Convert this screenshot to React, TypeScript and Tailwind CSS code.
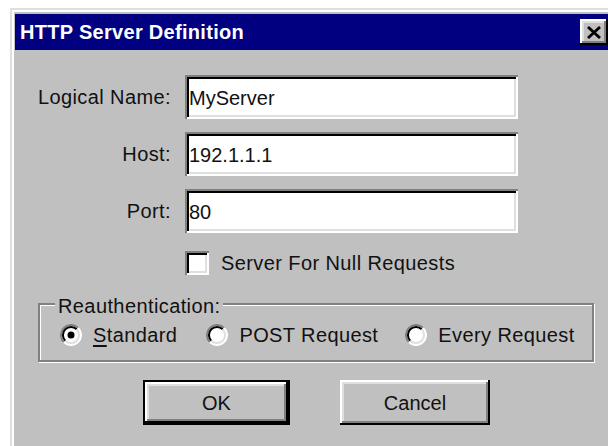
import React from 'react';

const font = { fontFamily: '"Liberation Sans", Arial, sans-serif' };

const raised =
  'bg-[#c0c0c0] shadow-[inset_-2px_-2px_0_#000,inset_2px_2px_0_#fff,inset_-4px_-4px_0_#808080,inset_4px_4px_0_#dfdfdf]';

const sunken =
  'bg-white shadow-[inset_2px_2px_0_#808080,inset_-2px_-2px_0_#fff,inset_4px_4px_0_#000,inset_-4px_-4px_0_#dfdfdf]';

function Field({ label, value }: { label: string; value: string }) {
  return (
    <div className="flex items-center">
      <span className="w-[157px] pr-[1px] text-right text-[20px] tracking-[0.4px] text-[#111]">{label}</span>
      <div className={`ml-[13px] flex h-[44px] w-[333px] items-center pl-[4px] pt-[2px] text-[20px] text-[#111] ${sunken}`}>
        {value}
      </div>
    </div>
  );
}

function Radio({ label, checked, underline }: { label: string; checked?: boolean; underline?: boolean }) {
  return (
    <div className="flex items-center gap-[11px]">
      <svg width="22" height="22" viewBox="0 0 22 22" className="shrink-0">
        <circle cx="11" cy="11" r="10" fill="#fff" />
        {/* top-left shadow arc */}
        <path d="M18.1 3.9 A10 10 0 0 0 3.9 18.1" fill="none" stroke="#808080" strokeWidth="2" />
        <path d="M16.7 5.3 A8 8 0 0 0 5.3 16.7" fill="none" stroke="#000" strokeWidth="2" />
        {/* bottom-right highlight arc */}
        <path d="M3.9 18.1 A10 10 0 0 0 18.1 3.9" fill="none" stroke="#fff" strokeWidth="2" />
        <path d="M5.3 16.7 A8 8 0 0 0 16.7 5.3" fill="none" stroke="#dfdfdf" strokeWidth="2" />
        {checked && <circle cx="11" cy="11" r="3.5" fill="#000" />}
      </svg>
      <span className="text-[20px] tracking-[0.4px] text-[#111]">
        {underline ? (
          <>
            <span className="underline underline-offset-[3px]">{label[0]}</span>
            {label.slice(1)}
          </>
        ) : (
          label
        )}
      </span>
    </div>
  );
}

export default function App() {
  return (
    <div className="h-[446px] w-[608px] overflow-hidden bg-white pl-[10px] pt-[8px]" style={font}>
      {/* Window frame */}
      <div className="h-[460px] w-[620px] border-l-2 border-t-2 border-[#dfdfdf] bg-[#c0c0c0] pl-[3px] pt-[4px] shadow-[inset_2px_2px_0_#fff]">
        {/* Title bar */}
        <div className="flex h-[36px] items-center bg-[#000080] pl-[5px]">
          <span className="w-[560px] text-[20px] font-bold tracking-[0.3px] text-white">HTTP Server Definition</span>
          <div className={`flex h-[26px] w-[28px] items-center justify-center ${raised}`}>
            <svg width="14" height="13" viewBox="0 0 14 13">
              <path d="M1 1 L13 12 M13 1 L1 12" stroke="#000" strokeWidth="2.8" />
            </svg>
          </div>
        </div>

        {/* Body */}
        <div className="flex flex-col pt-[25px]">
          <div className="flex flex-col gap-[13px]">
            <Field label="Logical Name:" value="MyServer" />
            <Field label="Host:" value="192.1.1.1" />
            <Field label="Port:" value="80" />
          </div>

          <div className="ml-[170px] mt-[15px] flex items-center gap-[12px]">
            <div className={`h-[24px] w-[24px] ${sunken}`} />
            <span className="text-[20px] tracking-[0.4px] text-[#111]">Server For Null Requests</span>
          </div>

          {/* Reauthentication group */}
          <div className="relative ml-[23px] mt-[25px] h-[59px] w-[556px] border-2 border-[#808080] shadow-[inset_1px_1px_0_#fff,1px_1px_0_#fff]">
            <span className="absolute left-[15px] top-[-14px] bg-[#c0c0c0] px-[3px] text-[20px] tracking-[0.4px] text-[#111]">
              Reauthentication:
            </span>
            <div className="flex h-full items-center pl-[20px] pt-[4px]">
              <Radio label="Standard" checked underline />
              <div className="ml-[29px]">
                <Radio label="POST Request" />
              </div>
              <div className="ml-[27px]">
                <Radio label="Every Request" />
              </div>
            </div>
          </div>

          {/* Buttons */}
          <div className="ml-[128px] mt-[18px] flex gap-[50px]">
            <div className="border-2 border-black">
              <div className={`flex h-[41px] w-[143px] items-center justify-center text-[20px] text-[#111] ${raised}`}>
                OK
              </div>
            </div>
            <div className={`flex h-[45px] w-[150px] items-center justify-center text-[20px] text-[#111] ${raised}`}>
              Cancel
            </div>
          </div>
        </div>
      </div>
    </div>
  );
}
